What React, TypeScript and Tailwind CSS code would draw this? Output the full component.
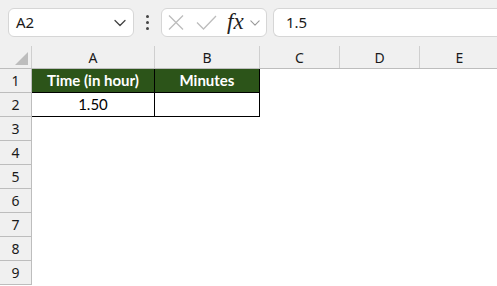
import React from "react";

const Chevron = ({ className = "" }: { className?: string }) => (
  <svg className={className} width="12" height="8" viewBox="0 0 12 8" fill="none">
    <path d="M1 1.5 L6 6.5 L11 1.5" stroke="currentColor" strokeWidth="1.3" strokeLinecap="round" strokeLinejoin="round" />
  </svg>
);

const cols = [
  { name: "A", w: "w-[123px]" },
  { name: "B", w: "w-[105px]" },
  { name: "C", w: "w-[80px]" },
  { name: "D", w: "w-[80px]" },
  { name: "E", w: "w-[80px]" },
];

export default function App() {
  const hdrFont = { fontFamily: '"Noto Sans", "Open Sans", sans-serif' };
  const cellFont = { fontFamily: 'Lato, "Liberation Sans", sans-serif' };
  return (
    <div className="w-[497px] h-[286px] overflow-hidden bg-white relative">
      {/* toolbar */}
      <div className="h-[46px] bg-[#f0f0f0] flex items-start pt-[8px] pl-[8px]" style={hdrFont}>
        <div className="w-[126px] h-[29px] bg-white border border-[#d6d6d6] rounded-[6px] flex items-center pl-[7px] pr-[7px] shrink-0">
          <span className="text-[15px] text-[#1a1a1a] flex-1 leading-none">A2</span>
          <Chevron className="text-[#444]" />
        </div>
        <div className="w-[27px] h-[29px] flex flex-col items-center justify-center gap-[3px] shrink-0">
          <div className="w-[3px] h-[3px] bg-[#444] rounded-full" />
          <div className="w-[3px] h-[3px] bg-[#444] rounded-full" />
          <div className="w-[3px] h-[3px] bg-[#444] rounded-full" />
        </div>
        <div className="w-[106px] h-[29px] bg-white border border-[#d6d6d6] rounded-[6px] flex items-center pl-[6px] shrink-0">
          <svg width="16" height="15" viewBox="0 0 16 15" fill="none">
            <path d="M1 0.5 L15 14.5 M15 0.5 L1 14.5" stroke="#bdbdbd" strokeWidth="1.3" />
          </svg>
          <svg className="ml-[12px]" width="21" height="15" viewBox="0 0 21 15" fill="none">
            <path d="M1 7.5 L7.5 14 L20 1" stroke="#bdbdbd" strokeWidth="1.3" />
          </svg>
          <span
            className="ml-[10px] text-[23px] italic text-[#222] leading-none -mt-[3px]"
            style={{ fontFamily: '"Liberation Serif", "DejaVu Serif", serif' }}
          >
            fx
          </span>
          <Chevron className="ml-[6px] text-[#9a9a9a] w-[10px]" />
        </div>
        <div className="ml-[6px] flex-1 h-[29px] bg-white border border-[#d6d6d6] rounded-l-[6px] border-r-0 flex items-center pl-[12px]">
          <span className="text-[15px] text-[#1a1a1a] leading-none">1.5</span>
        </div>
      </div>

      {/* column headers */}
      <div className="flex h-[23px] bg-[#f0f0f0] border-b border-[#bdbdbd]" style={hdrFont}>
        <div className="w-[32px] shrink-0 border-r border-[#cfcfcf] relative">
          <div
            className="absolute right-[3px] bottom-[3px] w-[13px] h-[13px] bg-[#bdbdbd]"
            style={{ clipPath: "polygon(100% 0, 100% 100%, 0 100%)" }}
          />
        </div>
        {cols.map((c) => (
          <div
            key={c.name}
            className={`${c.w} shrink-0 border-r border-[#cfcfcf] flex items-center justify-center text-[14px] text-[#1a1a1a]`}
          >
            {c.name}
          </div>
        ))}
      </div>

      {/* rows */}
      {[1, 2, 3, 4, 5, 6, 7, 8, 9].map((r) => (
        <div key={r} className="flex h-[24px]">
          <div
            className="w-[32px] shrink-0 bg-[#f0f0f0] border-r border-b border-[#bdbdbd] flex items-center justify-center text-[14px] text-[#1a1a1a]"
            style={hdrFont}
          >
            {r}
          </div>
          {r === 1 && (
            <>
              <div
                className="w-[123px] shrink-0 bg-[#2c5419] border-r border-b border-black flex items-center justify-center text-white font-bold text-[15px]"
                style={cellFont}
              >
                Time (in hour)
              </div>
              <div
                className="w-[105px] shrink-0 bg-[#2c5419] border-r border-b border-black flex items-center justify-center text-white font-bold text-[15px]"
                style={cellFont}
              >
                Minutes
              </div>
            </>
          )}
          {r === 2 && (
            <>
              <div
                className="w-[123px] shrink-0 border-r border-b border-black flex items-center justify-center text-black text-[15px]"
                style={cellFont}
              >
                1.50
              </div>
              <div className="w-[105px] shrink-0 border-r border-b border-black" />
            </>
          )}
        </div>
      ))}
    </div>
  );
}
